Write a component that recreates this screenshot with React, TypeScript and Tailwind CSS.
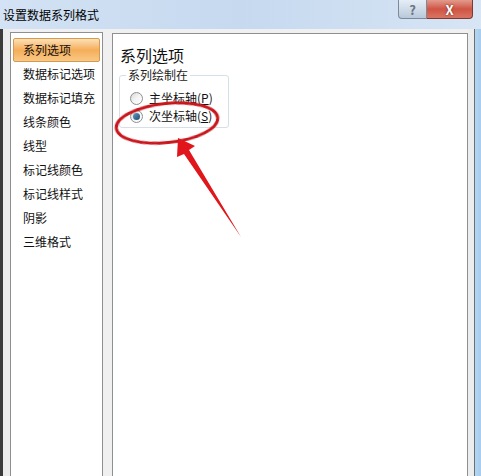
import React from "react";

const items = [
  "系列选项",
  "数据标记选项",
  "数据标记填充",
  "线条颜色",
  "线型",
  "标记线颜色",
  "标记线样式",
  "阴影",
  "三维格式",
];

function Radio({ checked }: { checked?: boolean }) {
  return (
    <div className="w-[13px] h-[13px] rounded-full border border-[#8e8f8f] bg-gradient-to-br from-[#d9d9d9] via-[#f4f4f4] to-white flex items-center justify-center shrink-0">
      {checked && (
        <div className="w-[7px] h-[7px] rounded-full bg-gradient-to-br from-[#6a9cc4] to-[#1b4a72]" />
      )}
    </div>
  );
}

export default function App() {
  return (
    <div
      className="relative w-[481px] h-[476px] overflow-hidden bg-[#f0f0f0] text-[#111] flex flex-col"
      style={{ fontFamily: '"Noto Sans CJK SC", "Noto Sans", sans-serif' }}
    >
      {/* title bar */}
      <div className="h-[29px] shrink-0 flex items-start justify-between bg-gradient-to-r from-[#d3e2f4] via-[#c6d9ef] to-[#d7e5f5]">
        <div className="pl-[3px] pt-[7px] text-[12px] leading-[16px] text-black">设置数据系列格式</div>
        <div className="flex pr-[8px]">
          <div className="w-[29px] h-[19px] rounded-bl-[4px] border border-t-0 border-[#7d8a98] bg-gradient-to-b from-[#e6eef7] to-[#b9c9da] flex items-center justify-center text-[13px] leading-none font-bold text-[#6c7580]">
            ?
          </div>
          <div className="w-[46px] h-[19px] rounded-br-[4px] border border-t-0 border-l-0 border-[#7d3a30] bg-gradient-to-b from-[#e29a8d] via-[#cf5444] to-[#d97462] flex items-center justify-center text-[13px] leading-none font-bold text-white [text-shadow:0_0_2px_#5a1a10]">
            X
          </div>
        </div>
      </div>

      {/* body */}
      <div className="flex-1 flex min-h-0">
        <div className="w-[3px] bg-[#3c3c3c] shrink-0" />
        <div className="w-[7px] bg-[#ececec] shrink-0" />
        {/* left list */}
        <div className="mt-[3px] w-[93px] shrink-0 bg-white border border-b-0 border-[#8e8f8f] pt-[5px] px-[1px]">
          {items.map((t, i) => (
            <div
              key={t}
              className={
                i === 0
                  ? "h-[24px] ml-[1px] mr-[1px] rounded-[2px] border border-[#d29a52] bg-gradient-to-b from-[#fce0b4] via-[#f5ad58] to-[#f9c885] pl-[9px] flex items-center text-[12px] leading-none"
                  : "h-[24px] pl-[11px] flex items-center text-[12px] leading-none"
              }
            >
              {t}
            </div>
          ))}
        </div>
        <div className="w-[9px] shrink-0" />
        {/* right panel */}
        <div className="mt-[4px] w-[356px] shrink-0 bg-white border border-b-0 border-[#8e8f8f] pl-[6px] pt-[13px]">
          <div className="text-[16px] leading-[16px] pl-[1px]">系列选项</div>
          <fieldset className="mt-[6px] w-[110px] h-[59px] border border-[#d5dfe5] rounded-[3px] px-0">
            <legend className="ml-[6px] px-[2px] text-[12px] leading-[12px] text-[#222]">系列绘制在</legend>
            <div className="mt-[8px] pl-[10px] h-[18px] flex items-center gap-[6px] text-[12px] leading-none">
              <Radio />
              <span>
                主坐标轴(<span className="underline">P</span>)
              </span>
            </div>
            <div className="pl-[10px] h-[18px] flex items-center gap-[6px] text-[12px] leading-none">
              <Radio checked />
              <span>
                次坐标轴(<span className="underline">S</span>)
              </span>
            </div>
          </fieldset>
        </div>
        <div className="w-[6px] bg-[#eceeee] shrink-0" />
        <div className="w-[1px] bg-[#6e6e6e] shrink-0" />
        <div className="flex-1 bg-gradient-to-r from-[#b4d6f2] to-[#a6cdee]" />
      </div>

      {/* annotation overlay */}
      <svg
        className="absolute inset-0 pointer-events-none"
        width="481"
        height="476"
        viewBox="0 0 481 476"
      >
        <defs>
          <filter id="soft" x="-20%" y="-20%" width="140%" height="140%">
            <feGaussianBlur stdDeviation="0.6" />
          </filter>
        </defs>
        <ellipse
          cx="167"
          cy="123"
          rx="51"
          ry="19.5"
          transform="rotate(-6 167 123)"
          fill="none"
          stroke="#c8141a"
          strokeWidth="3"
          filter="url(#soft)"
        />
        <polygon
          points="178,138 195,146 189,150 241,237 184,154 177,157"
          fill="#e0141a"
          filter="url(#soft)"
        />
      </svg>
    </div>
  );
}
